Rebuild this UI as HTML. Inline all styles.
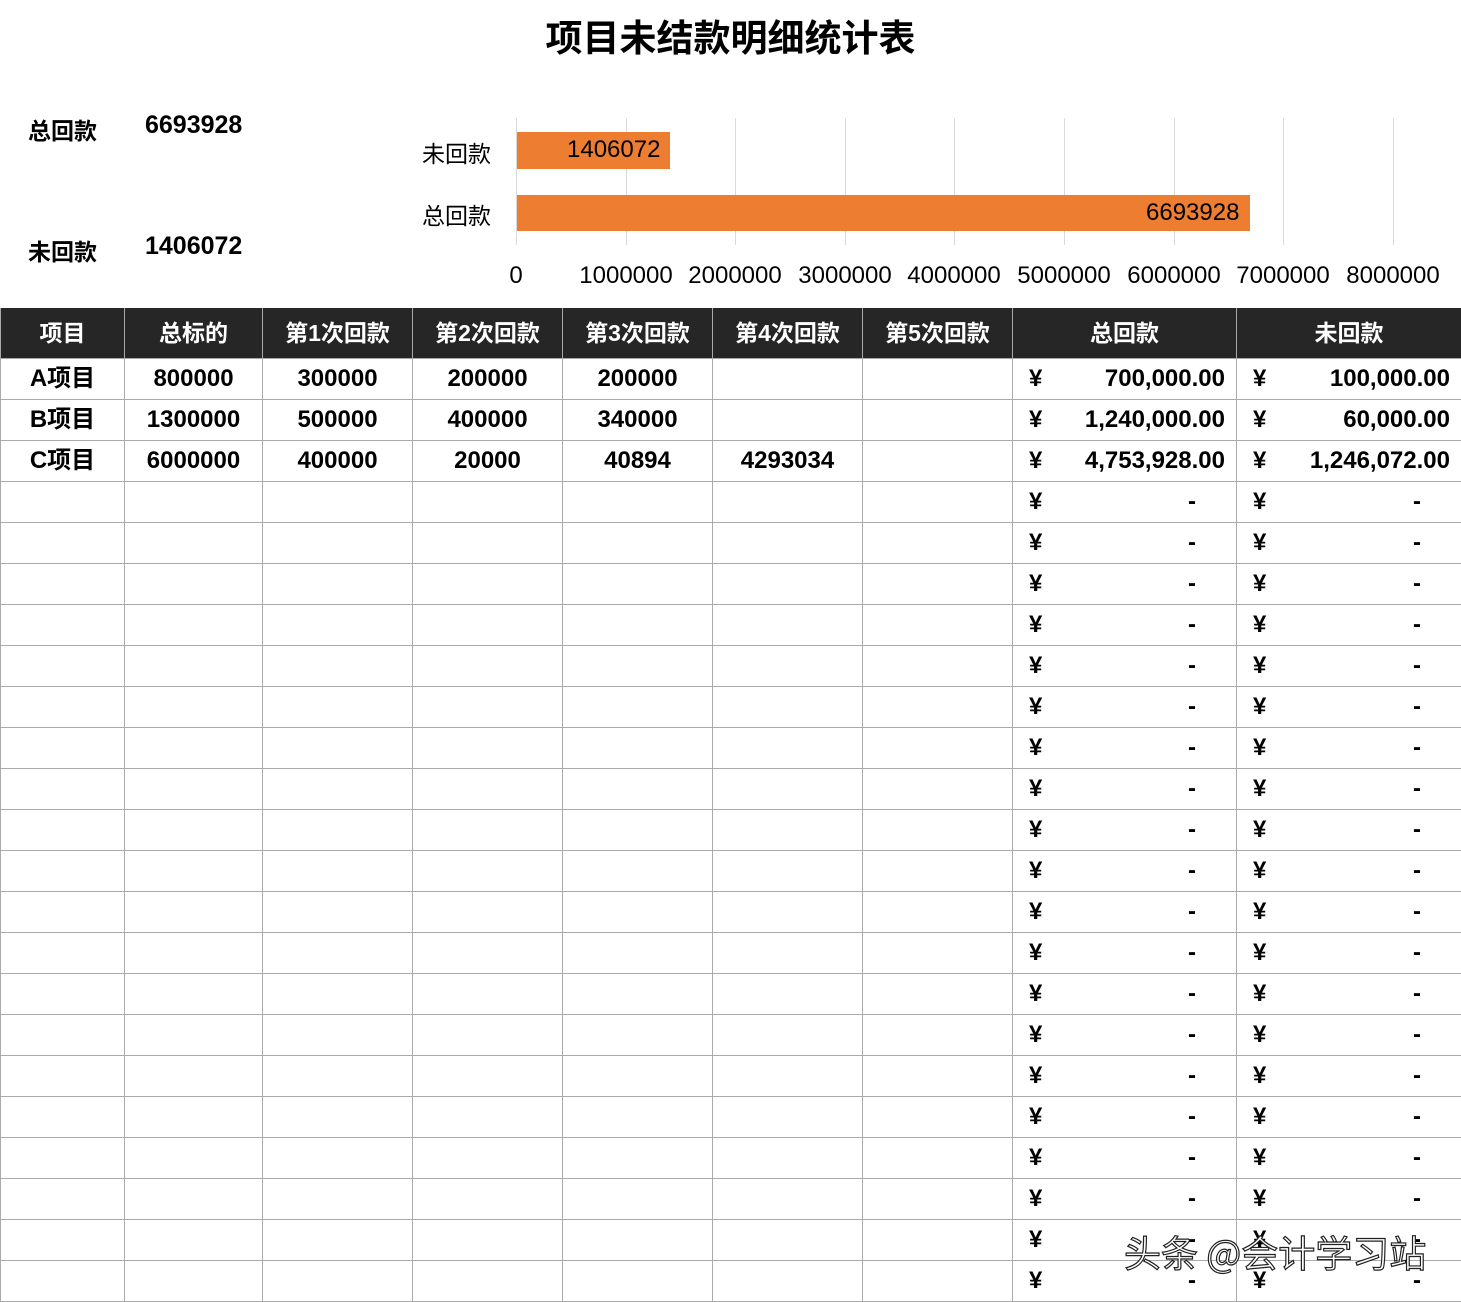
<!DOCTYPE html>
<html><head><meta charset="utf-8"><style>
*{margin:0;padding:0;box-sizing:border-box}
body{width:1461px;height:1302px;background:#fff;position:relative;overflow:hidden;font-family:"Liberation Sans","Noto Sans CJK SC",sans-serif;color:#000}
.a{position:absolute;white-space:nowrap}
.t{font-weight:bold;font-size:23px}
.n{font-weight:bold;font-size:25px}
table{position:absolute;left:0;top:308px;border-collapse:collapse;table-layout:fixed;width:1461px}
td{border:1px solid #aaa;height:41px;text-align:center;font-weight:bold;font-size:24px;position:relative;padding:0;line-height:38px}
tr.h td{background:#262626;color:#fff;height:50px;border-color:#aaa;border-top:none;font-size:23px}
td.m{text-align:right;padding-right:11px}
td.m span{position:absolute;left:16px}
td.d{text-align:right;padding-right:40px}
td.d span{position:absolute;left:16px}
.g{position:absolute;top:118px;width:1px;height:127px;background:#d9d9d9}
.x{position:absolute;top:262px;font-size:24px;transform:translateX(-50%)}
</style></head><body>
<div class="a" style="left:0;width:1461px;text-align:center;top:8px;font-size:37px;font-weight:bold">项目未结款明细统计表</div>
<div class="a t" style="left:28px;top:112px">总回款</div>
<div class="a n" style="left:145px;top:111px">6693928</div>
<div class="a t" style="left:28px;top:233px">未回款</div>
<div class="a n" style="left:145px;top:232px">1406072</div>

<div class="g" style="left:516px"></div><div class="g" style="left:626px"></div><div class="g" style="left:735px"></div><div class="g" style="left:845px"></div><div class="g" style="left:954px"></div><div class="g" style="left:1064px"></div><div class="g" style="left:1174px"></div><div class="g" style="left:1283px"></div><div class="g" style="left:1393px"></div>
<div class="a" style="left:517px;top:132px;width:153px;height:37px;background:#ed7d31"></div>
<div class="a" style="left:517px;top:195px;width:733px;height:36px;background:#ed7d31"></div>
<div class="a" style="left:567px;top:136px;font-size:24px">1406072</div>
<div class="a" style="left:1146px;top:199px;font-size:24px">6693928</div>
<div class="a" style="left:422px;top:135px;font-size:23px">未回款</div>
<div class="a" style="left:422px;top:197px;font-size:23px">总回款</div>
<div class="x" style="left:516px">0</div><div class="x" style="left:626px">1000000</div><div class="x" style="left:735px">2000000</div><div class="x" style="left:845px">3000000</div><div class="x" style="left:954px">4000000</div><div class="x" style="left:1064px">5000000</div><div class="x" style="left:1174px">6000000</div><div class="x" style="left:1283px">7000000</div><div class="x" style="left:1393px">8000000</div>

<table>
<colgroup><col style="width:124px"><col style="width:138px"><col style="width:150px"><col style="width:150px"><col style="width:150px"><col style="width:150px"><col style="width:150px"><col style="width:224px"><col style="width:225px"></colgroup>
<tr class="h"><td>项目</td><td>总标的</td><td>第1次回款</td><td>第2次回款</td><td>第3次回款</td><td>第4次回款</td><td>第5次回款</td><td>总回款</td><td>未回款</td></tr>
<tr><td>A项目</td><td>800000</td><td>300000</td><td>200000</td><td>200000</td><td></td><td></td><td class="m"><span>¥</span>700,000.00</td><td class="m"><span>¥</span>100,000.00</td></tr>
<tr><td>B项目</td><td>1300000</td><td>500000</td><td>400000</td><td>340000</td><td></td><td></td><td class="m"><span>¥</span>1,240,000.00</td><td class="m"><span>¥</span>60,000.00</td></tr>
<tr><td>C项目</td><td>6000000</td><td>400000</td><td>20000</td><td>40894</td><td>4293034</td><td></td><td class="m"><span>¥</span>4,753,928.00</td><td class="m"><span>¥</span>1,246,072.00</td></tr>
<tr><td></td><td></td><td></td><td></td><td></td><td></td><td></td><td class="d"><span>¥</span>-</td><td class="d"><span>¥</span>-</td></tr>
<tr><td></td><td></td><td></td><td></td><td></td><td></td><td></td><td class="d"><span>¥</span>-</td><td class="d"><span>¥</span>-</td></tr>
<tr><td></td><td></td><td></td><td></td><td></td><td></td><td></td><td class="d"><span>¥</span>-</td><td class="d"><span>¥</span>-</td></tr>
<tr><td></td><td></td><td></td><td></td><td></td><td></td><td></td><td class="d"><span>¥</span>-</td><td class="d"><span>¥</span>-</td></tr>
<tr><td></td><td></td><td></td><td></td><td></td><td></td><td></td><td class="d"><span>¥</span>-</td><td class="d"><span>¥</span>-</td></tr>
<tr><td></td><td></td><td></td><td></td><td></td><td></td><td></td><td class="d"><span>¥</span>-</td><td class="d"><span>¥</span>-</td></tr>
<tr><td></td><td></td><td></td><td></td><td></td><td></td><td></td><td class="d"><span>¥</span>-</td><td class="d"><span>¥</span>-</td></tr>
<tr><td></td><td></td><td></td><td></td><td></td><td></td><td></td><td class="d"><span>¥</span>-</td><td class="d"><span>¥</span>-</td></tr>
<tr><td></td><td></td><td></td><td></td><td></td><td></td><td></td><td class="d"><span>¥</span>-</td><td class="d"><span>¥</span>-</td></tr>
<tr><td></td><td></td><td></td><td></td><td></td><td></td><td></td><td class="d"><span>¥</span>-</td><td class="d"><span>¥</span>-</td></tr>
<tr><td></td><td></td><td></td><td></td><td></td><td></td><td></td><td class="d"><span>¥</span>-</td><td class="d"><span>¥</span>-</td></tr>
<tr><td></td><td></td><td></td><td></td><td></td><td></td><td></td><td class="d"><span>¥</span>-</td><td class="d"><span>¥</span>-</td></tr>
<tr><td></td><td></td><td></td><td></td><td></td><td></td><td></td><td class="d"><span>¥</span>-</td><td class="d"><span>¥</span>-</td></tr>
<tr><td></td><td></td><td></td><td></td><td></td><td></td><td></td><td class="d"><span>¥</span>-</td><td class="d"><span>¥</span>-</td></tr>
<tr><td></td><td></td><td></td><td></td><td></td><td></td><td></td><td class="d"><span>¥</span>-</td><td class="d"><span>¥</span>-</td></tr>
<tr><td></td><td></td><td></td><td></td><td></td><td></td><td></td><td class="d"><span>¥</span>-</td><td class="d"><span>¥</span>-</td></tr>
<tr><td></td><td></td><td></td><td></td><td></td><td></td><td></td><td class="d"><span>¥</span>-</td><td class="d"><span>¥</span>-</td></tr>
<tr><td></td><td></td><td></td><td></td><td></td><td></td><td></td><td class="d"><span>¥</span>-</td><td class="d"><span>¥</span>-</td></tr>
<tr><td></td><td></td><td></td><td></td><td></td><td></td><td></td><td class="d"><span>¥</span>-</td><td class="d"><span>¥</span>-</td></tr>
<tr><td></td><td></td><td></td><td></td><td></td><td></td><td></td><td class="d"><span>¥</span>-</td><td class="d"><span>¥</span>-</td></tr>
</table>
<div class="a" style="left:1124px;top:1224px;font-size:37px;color:#fff;-webkit-text-stroke:1.2px #222;font-family:'Noto Sans CJK SC',sans-serif">头条 @会计学习站</div>
</body></html>
